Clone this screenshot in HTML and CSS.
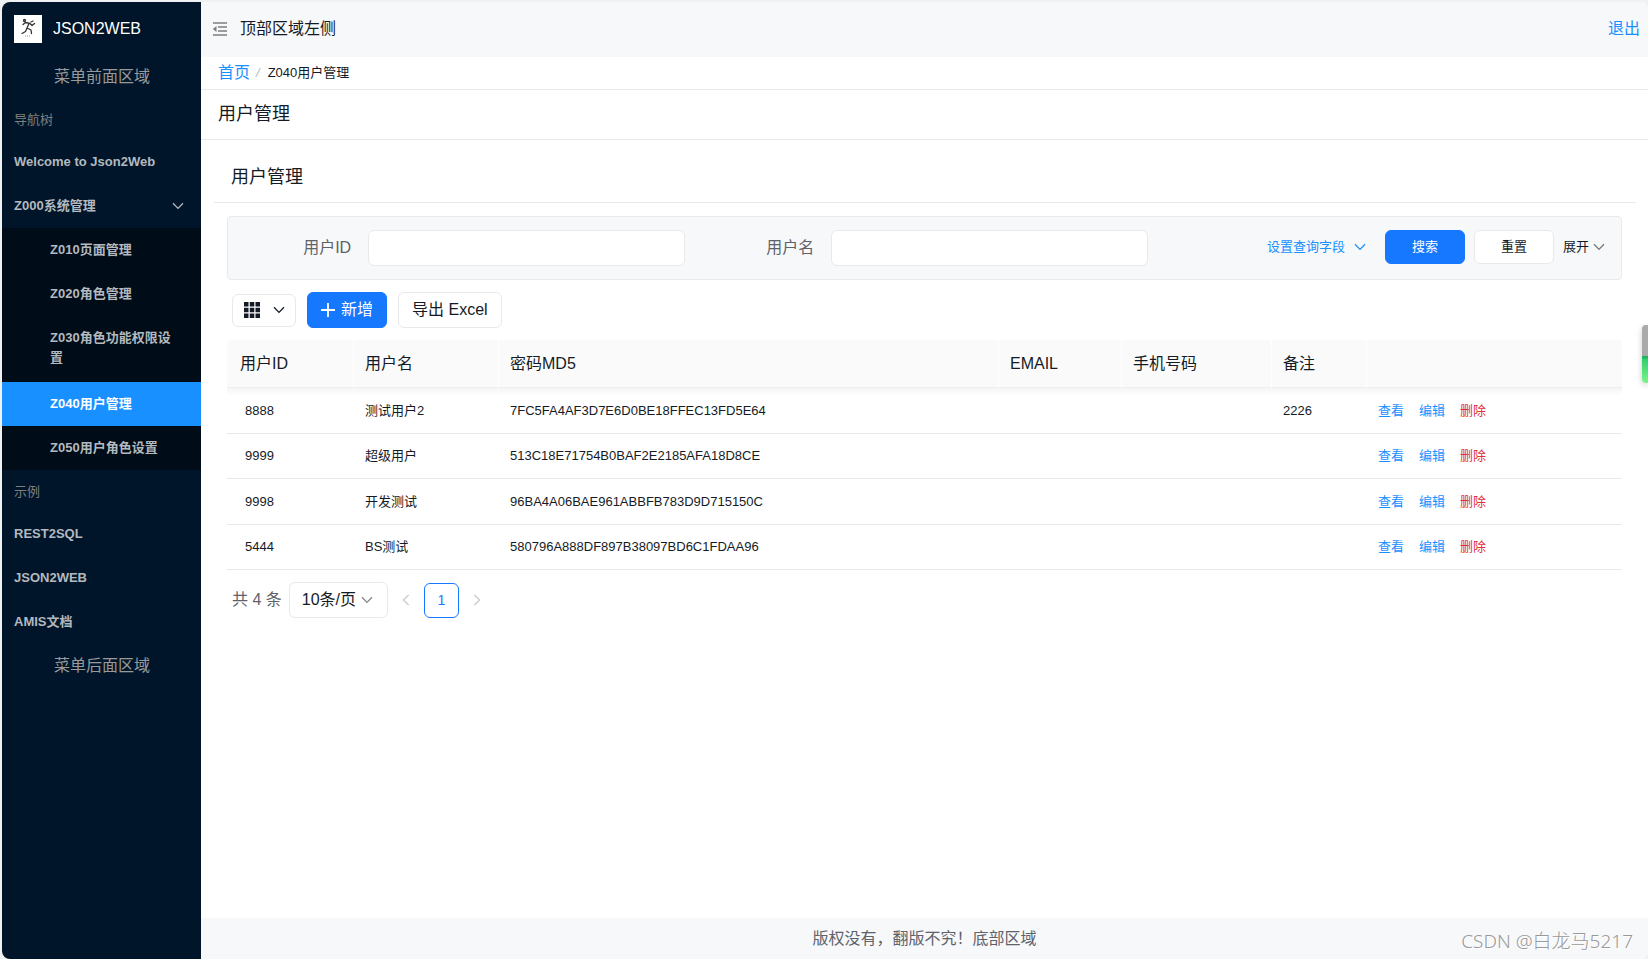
FILE: index.html
```html
<!DOCTYPE html>
<html lang="zh-CN">
<head>
<meta charset="utf-8">
<title>JSON2WEB</title>
<link rel="stylesheet" href="styles.css">
</head>
<body>
<svg class="sprite" aria-hidden="true">
  <symbol id="down" viewBox="0 0 12 8"><path d="M1 1.2 6 6.4 11 1.2" fill="none" stroke="currentColor" stroke-width="1.3"/></symbol>
  <symbol id="left" viewBox="0 0 8 12"><path d="M6.6 1 1.4 6 6.6 11" fill="none" stroke="currentColor" stroke-width="1.2"/></symbol>
  <symbol id="right" viewBox="0 0 8 12"><path d="M1.4 1 6.6 6 1.4 11" fill="none" stroke="currentColor" stroke-width="1.2"/></symbol>
</svg>
<div class="app">
  <aside class="side">
    <div class="brand">
      <svg class="logo" viewBox="0 0 28 28" aria-hidden="true">
        <rect width="28" height="28" fill="#fff"/>
        <g fill="none" stroke="#333" stroke-width="1.3" stroke-linecap="round" stroke-linejoin="round">
          <circle cx="10.500" cy="5.500" r="1"/>
          <path d="M9 9.500 11.500 7.500 16 8.500 18 10.500 20.500 8.500M15 8.500 13 13 17 15 17.500 18.500M13 13 11.500 16.500 8 18.500M17 7l2-1"/>
        </g>
        <path d="M11 21h5" stroke="#999" stroke-width="1" fill="none" stroke-dasharray="1 1"/>
      </svg>
      <span>JSON2WEB</span>
    </div>
    <div class="slot">菜单前面区域</div>
    <nav class="menu">
      <h2 class="group">导航树</h2>
      <a class="item" href="#">Welcome to Json2Web</a>
      <a class="item" href="#"><span>Z000系统管理</span><svg class="chev"><use href="#down"/></svg></a>
      <div class="sub">
        <a class="item" href="#">Z010页面管理</a>
        <a class="item" href="#">Z020角色管理</a>
        <a class="item" href="#">Z030角色功能权限设置</a>
        <a class="item active" href="#">Z040用户管理</a>
        <a class="item" href="#">Z050用户角色设置</a>
      </div>
      <h2 class="group">示例</h2>
      <a class="item" href="#">REST2SQL</a>
      <a class="item" href="#">JSON2WEB</a>
      <a class="item" href="#">AMIS文档</a>
    </nav>
    <div class="slot">菜单后面区域</div>
  </aside>
  <div class="main">
    <header class="top">
      <button class="fold" type="button" aria-label="收起菜单">
        <svg width="16" height="14" viewBox="0 0 16 14"><path d="M1 1h14M6 5h9M6 9h9M1 13h14" stroke="#7b7f83" stroke-width="1.6" fill="none"/><path d="M4.500 4v6L.800 7z" fill="#7b7f83"/></svg>
      </button>
      <span>顶部区域左侧</span>
      <a class="logout" href="#">退出</a>
    </header>
    <nav class="crumbs"><a href="#">首页</a><i>/</i><span>Z040用户管理</span></nav>
    <h1 class="title">用户管理</h1>
    <main class="page">
      <h2 class="panel-title">用户管理</h2>
      <div class="crud">
        <form class="filter">
          <div class="field"><label for="uid">用户ID</label><input id="uid" type="text"></div>
          <div class="field"><label for="uname">用户名</label><input id="uname" type="text"></div>
          <div class="actions">
            <button class="link" type="button">设置查询字段<svg class="chev"><use href="#down"/></svg></button>
            <button class="btn primary" type="button">搜索</button>
            <button class="btn" type="button">重置</button>
            <button class="more" type="button">展开<svg class="chev"><use href="#down"/></svg></button>
          </div>
        </form>
        <div class="tools">
          <button class="tool columns" type="button" aria-label="列设置">
            <svg width="16" height="16" viewBox="0 0 16 16" fill="#151b26"><path d="M0 0h4.500v4.500H0zM5.800 0h4.500v4.500H5.800zM11.500 0H16v4.500h-4.500zM0 5.800h4.500v4.500H0zM5.800 5.800h4.500v4.500H5.800zM11.500 5.800H16v4.500h-4.500zM0 11.500h4.500V16H0zM5.800 11.500h4.500V16H5.800zM11.500 11.500H16V16h-4.500z"/></svg>
            <svg class="chev"><use href="#down"/></svg>
          </button>
          <button class="tool primary" type="button"><svg width="14" height="14" viewBox="0 0 14 14"><path d="M7 0v14M0 7h14" stroke="#fff" stroke-width="1.800"/></svg>新增</button>
          <button class="tool" type="button">导出 Excel</button>
        </div>
        <table class="grid">
          <colgroup><col class="c-id"><col class="c-name"><col class="c-md5"><col class="c-email"><col class="c-phone"><col class="c-note"><col></colgroup>
          <thead><tr><th>用户ID</th><th>用户名</th><th>密码MD5</th><th>EMAIL</th><th>手机号码</th><th>备注</th><th></th></tr></thead>
          <tbody>
            <tr><td>8888</td><td>测试用户2</td><td>7FC5FA4AF3D7E6D0BE18FFEC13FD5E64</td><td></td><td></td><td>2226</td><td class="ops"><a href="#">查看</a><a href="#">编辑</a><a class="del" href="#">删除</a></td></tr>
            <tr><td>9999</td><td>超级用户</td><td>513C18E71754B0BAF2E2185AFA18D8CE</td><td></td><td></td><td></td><td class="ops"><a href="#">查看</a><a href="#">编辑</a><a class="del" href="#">删除</a></td></tr>
            <tr><td>9998</td><td>开发测试</td><td>96BA4A06BAE961ABBFB783D9D715150C</td><td></td><td></td><td></td><td class="ops"><a href="#">查看</a><a href="#">编辑</a><a class="del" href="#">删除</a></td></tr>
            <tr><td>5444</td><td>BS测试</td><td>580796A888DF897B38097BD6C1FDAA96</td><td></td><td></td><td></td><td class="ops"><a href="#">查看</a><a href="#">编辑</a><a class="del" href="#">删除</a></td></tr>
          </tbody>
        </table>
        <div class="pager">
          <span>共 4 条</span>
          <span class="size"><select aria-label="每页条数"><option>10条/页</option></select><svg class="chev"><use href="#down"/></svg></span>
          <button class="step" type="button" aria-label="上一页"><svg width="8" height="12"><use href="#left"/></svg></button>
          <button class="num" type="button">1</button>
          <button class="step" type="button" aria-label="下一页"><svg width="8" height="12"><use href="#right"/></svg></button>
        </div>
      </div>
    </main>
    <footer class="foot">版权没有，翻版不究！底部区域</footer>
  </div>
  <div class="handle"></div>
  <div class="mark">CSDN @白龙马5217</div>
</div>
</body>
</html>
```
FILE: styles.css
```css
* { box-sizing: border-box; }
body {
  margin: 0;
  background: #f0f1f2;
  color: #151b26;
  font: 16px/24px "Liberation Sans", "Noto Sans CJK SC", sans-serif;
}
a { color: #1890ff; text-decoration: none; }
h1, h2 { margin: 0; font-weight: 400; }
button, input, select { font: inherit; color: inherit; }
button { display: flex; align-items: center; justify-content: center; padding: 0; border: 0; background: none; white-space: nowrap; }
.sprite { display: none; }
.chev { width: 12px; height: 8px; flex: none; }

.app { display: flex; min-height: 100vh; padding: 2px 0 0 2px; }
.side { width: 199px; flex: none; background: #001529; border-radius: 8px 0 0 8px; color: #999; }
.brand { display: flex; align-items: center; gap: 11px; height: 54px; padding: 0 12px; color: #fff; }
.logo { width: 28px; height: 28px; }
.slot { padding: 9px 0 9px 52px; }
.group { padding: 12px 12px 10px; font-size: 13px; line-height: 20px; color: #7f7f7f; }
.item { display: flex; align-items: center; justify-content: space-between; padding: 12px 17px 12px 12px; font-size: 13px; line-height: 20px; font-weight: 700; color: #b3b9bf; }
.sub { background: #000c17; }
.sub .item { padding-left: 48px; padding-right: 22px; }
.sub .item:nth-child(3) { padding-bottom: 14px; }
.item.active { background: #1890ff; color: #fff; }

.menu + .slot { padding-top: 10px; }

.main { flex: 1; min-width: 0; display: flex; flex-direction: column; background: #fff; border-radius: 0 8px 8px 0; overflow: hidden; }
.top { display: flex; align-items: center; gap: 12px; height: 55px; padding: 0 8px 2px 11px; background: #f7f8fa; }
.logout { margin-left: auto; }
.crumbs { display: flex; align-items: center; height: 33px; padding: 0 17px; border-bottom: 1px solid #e8e9eb; }
.crumbs i { margin: 0 8px 0 6px; color: #b8babf; font-size: 13px; }
.crumbs span { font-size: 13px; }
.title { padding: 12px 17px 13px; font-size: 18px; border-bottom: 1px solid #e8e9eb; }
.page { flex: 1; padding: 12px 12px 0 13px; }
.panel-title { padding: 13px 17px; font-size: 18px; border-bottom: 1px solid #e8e9eb; }
.crud { padding: 13px 14px 0 13px; }

.filter { display: flex; align-items: center; height: 64px; padding: 0 16px 0 0; border: 1px solid #e8e9eb; border-radius: 4px; background: #f7f8fa; color: #5e626a; }
.field { display: flex; align-items: center; justify-content: flex-end; width: 33.2%; gap: 17px; }
.field + .field { margin-left: 6px; }
.field input { width: 317px; height: 36px; padding: 0 12px; border: 1px solid #e8e9eb; border-radius: 6px; background: #fff; }
.actions { display: flex; align-items: center; margin-left: auto; padding-bottom: 2px; font-size: 13px; color: #151b26; }
.link { color: #1890ff; gap: 9px; margin-right: 19px; }
.btn { width: 80px; height: 34px; margin-right: 9px; border: 1px solid #e8e9eb; border-radius: 6px; background: #fff; }
.btn.primary, .tool.primary { border-color: #1677ff; background: #1677ff; color: #fff; }
.more { gap: 4px; }
.more .chev { color: #777; }

.tools { display: flex; align-items: center; gap: 11px; padding: 12px 5px; }
.tool { height: 36px; padding: 0 13px; gap: 6px; border: 1px solid #e8e9eb; border-radius: 6px; background: #fff; }
.tool.columns { width: 64px; height: 33px; padding: 0; gap: 13px; }

.grid { width: 100%; table-layout: fixed; border-collapse: separate; border-spacing: 0; }
.c-id { width: 127px; }
.c-name { width: 145px; }
.c-md5 { width: 500px; }
.c-email { width: 123px; }
.c-phone { width: 150px; }
.c-note { width: 95px; }
.grid th { height: 48px; padding: 0 11px; text-align: left; font-weight: 400; background: #fafafa; border-right: 1px solid #fff; border-bottom: 1px solid #eee; }
.grid th:first-child { padding-left: 13px; border-top-left-radius: 4px; }
.grid th:last-child { border-right: 0; border-top-right-radius: 4px; }
.grid td { height: 45px; padding: 0 11px; font-size: 13px; border-bottom: 1px solid #e8e9eb; }
.grid td:first-child { padding-left: 18px; }
.grid tbody tr:nth-child(odd) td { height: 46px; }
.grid tbody tr:first-child td { background: linear-gradient(#f5f5f5, #fff 8px); }
.ops a { margin-right: 15px; }
.ops .del { color: #e0303a; }

.pager { display: flex; align-items: center; padding: 12px 5px; color: #5e626a; }
.size { display: flex; align-items: center; margin: 0 12px 0 7px; height: 36px; padding-right: 14px; border: 1px solid #e8e9eb; border-radius: 6px; }
.size select { appearance: none; padding: 0 4px 0 12px; border: 0; background: none; color: #151b26; }
.size .chev { color: #84868c; }
.step { width: 12px; height: 32px; color: #c8c9cc; }
.num { width: 35px; height: 35px; margin: 0 12px; border: 1px solid #1677ff; border-radius: 6px; font-size: 14px; color: #1677ff; }

.foot { padding: 9px 0 8px; background: #f7f8fa; text-align: center; color: #5e626a; }
.handle { position: absolute; right: 0; top: 325px; width: 6px; height: 58px; border-radius: 4px 0 0 4px; background: linear-gradient(#aaa 0 31px, #23b35f 31px 33px, #2fcf6c 34px, #7df58a); box-shadow: 0 2px 6px #0003; }
.mark { position: absolute; right: 15px; bottom: 6px; font: 19px/24px "Noto Sans", "Noto Sans CJK SC", sans-serif; font-weight: 300; color: #999; text-shadow: 1px 1px 0 #fff; }
```
